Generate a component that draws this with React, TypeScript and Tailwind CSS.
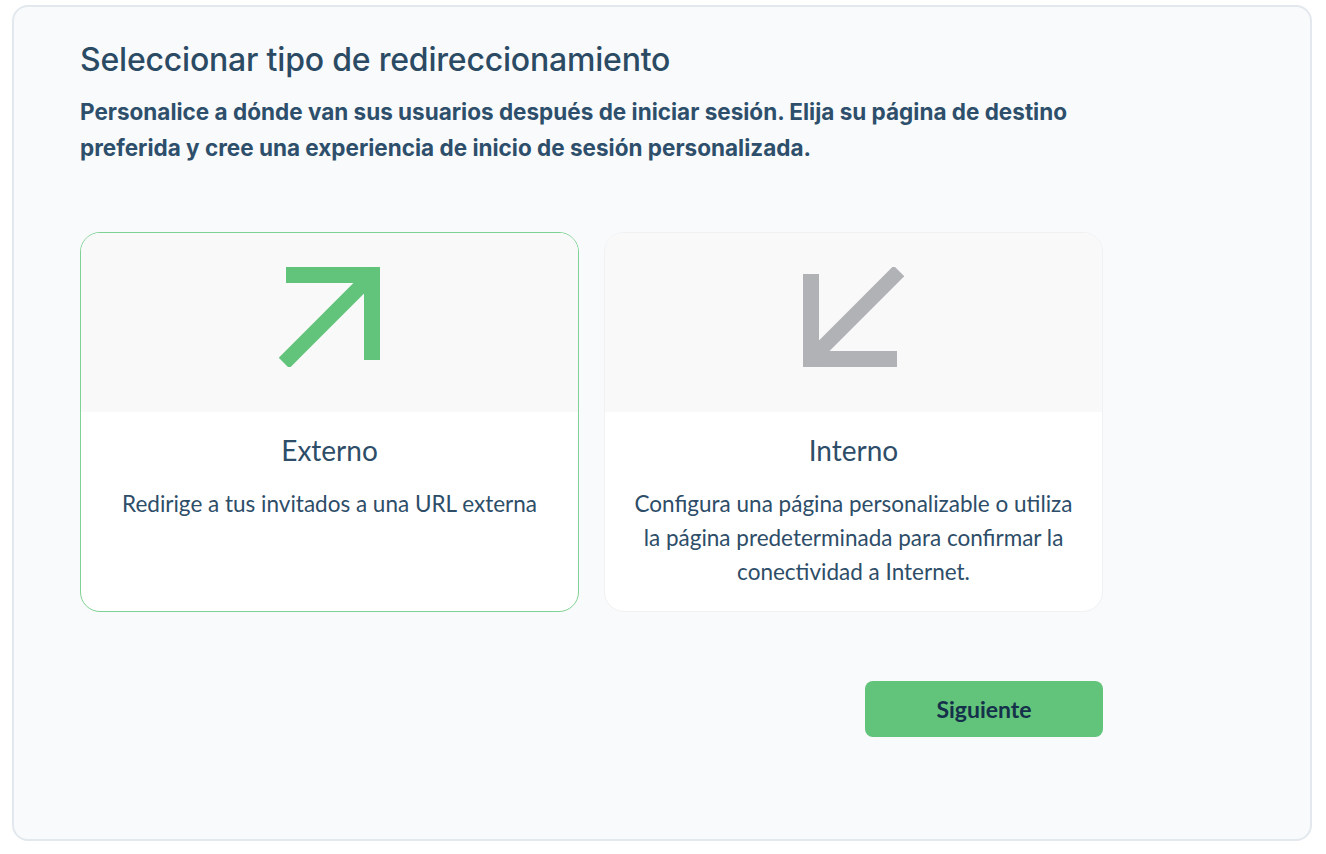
import { useState } from 'react';

type Option = {
  id: 'external' | 'internal';
  title: string;
  description: string;
};

const options: Option[] = [
  {
    id: 'external',
    title: 'Externo',
    description: 'Redirige a tus invitados a una URL externa',
  },
  {
    id: 'internal',
    title: 'Interno',
    description:
      'Configura una página personalizable o utiliza la página predeterminada para confirmar la conectividad a Internet.',
  },
];

function ArrowIcon({ color, flip }: { color: string; flip?: boolean }) {
  return (
    <svg
      width="101"
      height="100"
      viewBox="0 0 101 100"
      className={flip ? 'rotate-180' : ''}
      fill="none"
    >
      <path d="M7 8H93V93" stroke={color} strokeWidth="16" strokeLinejoin="miter" />
      <path d="M93 8L5 96" stroke={color} strokeWidth="15" />
    </svg>
  );
}

function OptionCard({
  option,
  selected,
  onSelect,
}: {
  option: Option;
  selected: boolean;
  onSelect: () => void;
}) {
  return (
    <button
      type="button"
      onClick={onSelect}
      className={`flex flex-col w-[499px] h-[380px] rounded-[20px] overflow-hidden bg-white text-left border ${
        selected ? 'border-[#7fd295]' : 'border-[#f0f1f3]'
      }`}
    >
      <div className="flex justify-center h-[179px] w-full bg-[#f9f9fa] pt-[34px]">
        <ArrowIcon color={option.id === 'external' ? '#62c37a' : '#b1b2b6'} flip={option.id === 'internal'} />
      </div>
      <div className="flex flex-col items-center px-5 pt-[18px] text-center font-['Lato',sans-serif] text-[#2d4d68]">
        <h3 className="text-[28px] leading-[40px]">{option.title}</h3>
        <p className="mt-[17px] text-[22.5px] leading-[34px] max-w-[460px]">{option.description}</p>
      </div>
    </button>
  );
}

export default function App() {
  const [selected, setSelected] = useState<Option['id']>('external');

  return (
    <div className="min-h-screen bg-white pl-[12px] pt-[5px]">
      <div className="w-[1300px] h-[836px] rounded-[16px] border-2 border-[#e3e8ee] bg-[#f9fafb] pl-[66px] pt-[33px]">
        <h1 className="font-['Inter',sans-serif] text-[32px] leading-[40px] font-medium tracking-[-0.2px] text-[#2b4b65]">
          Seleccionar tipo de redireccionamiento
        </h1>
        <p className="mt-[14px] w-[1010px] font-['Inter',sans-serif] text-[22.5px] leading-[36px] font-bold text-[#2d4f6b]">
          Personalice a dónde van sus usuarios después de iniciar sesión. Elija su página de destino preferida y cree
          una experiencia de inicio de sesión personalizada.
        </p>

        <div className="mt-[66px] flex gap-[25px]">
          {options.map((o) => (
            <OptionCard key={o.id} option={o} selected={selected === o.id} onSelect={() => setSelected(o.id)} />
          ))}
        </div>

        <div className="mt-[69px] flex w-[1023px] justify-end">
          <button
            type="button"
            className="w-[238px] h-[56px] rounded-[8px] bg-[#62c37a] font-['Lato',sans-serif] text-[23px] font-bold text-[#15304a]"
          >
            Siguiente
          </button>
        </div>
      </div>
    </div>
  );
}
